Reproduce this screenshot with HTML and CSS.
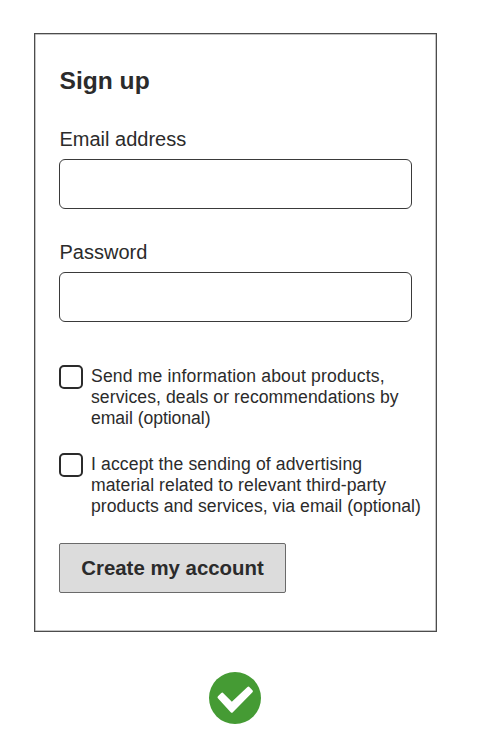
FILE: index.html
```html
<!DOCTYPE html>
<html lang="en">
<head>
<meta charset="utf-8">
<title>Sign up</title>
<link rel="stylesheet" href="styles.css">
</head>
<body>
<main class="page">
  <form class="card">
    <h1 class="title">Sign up</h1>
    <div class="field">
      <label class="label" for="email">Email address</label>
      <input class="input" id="email" type="email">
    </div>
    <div class="field">
      <label class="label" for="password">Password</label>
      <input class="input" id="password" type="password">
    </div>
    <div class="options">
      <label class="option">
        <input class="checkbox" type="checkbox">
        <span class="option-text"><span class="line loosest">Send me information about products,</span> <span class="line loose">services, deals or recommendations by</span> <span class="line tight">email (optional)</span></span>
      </label>
      <label class="option">
        <input class="checkbox" type="checkbox">
        <span class="option-text"><span class="line looser">I accept the sending of advertising</span> <span class="line loose">material related to relevant third-party</span> <span class="line">products and services, via email (optional)</span></span>
      </label>
    </div>
    <button class="submit" type="button">Create my account</button>
  </form>
  <svg class="status" viewBox="0 0 52 52" aria-hidden="true">
    <circle cx="26" cy="26" r="26" fill="#459b34"/>
    <path d="M10 25.3L13.3 22.2L22.8 31.8L39.5 16.2L42.4 19.2L22.8 39.2Z" fill="#fff" stroke="#fff" stroke-width="3" stroke-linejoin="round"/>
  </svg>
</main>
</body>
</html>
```

FILE: styles.css
```css
* { box-sizing: border-box; }

body {
  margin: 0;
  background: #fff;
  color: #2b2b2b;
  font-family: "Liberation Sans", Arial, sans-serif;
}

.page {
  display: flex;
  flex-direction: column;
  width: 498px;
  height: 744px;
  padding: 33px 0 0 34px;
}

.card {
  width: 403px;
  height: 599px;
  padding: 31px 0 0 24px;
  border: 1px solid #4c4c4c;
  box-shadow: inset 0 0 0 .5px #8a8a8a;
}

.title {
  height: 31px;
  margin: 0;
  padding-left: .5px;
  font-size: 24.6px;
  line-height: 32px;
}

.field {
  display: flex;
  flex-direction: column;
  margin-top: 31px;
}

.label {
  height: 32px;
  padding-left: .5px;
  font-size: 20px;
  line-height: 24px;
}

.input {
  width: 353px;
  height: 50px;
  margin: 0;
  border: 1px solid #3a3a3a;
  border-radius: 6px;
  background: #fff;
}

.options {
  display: flex;
  flex-direction: column;
  gap: 24px;
  margin-top: 43px;
}

.option {
  display: flex;
  gap: 8px;
  height: 64px;
}

.checkbox {
  appearance: none;
  flex: none;
  width: 24px;
  height: 24px;
  margin: 0;
  border: 2px solid #2b2b2b;
  border-radius: 5px;
}

.option-text {
  padding-top: 1px;
  font-size: 17.6px;
  line-height: 21.2px;
  white-space: nowrap;
}

.line {
  display: block;
  letter-spacing: .03px;
}

.tight { letter-spacing: -.05px; }
.loose { letter-spacing: .07px; }
.looser { letter-spacing: .12px; }
.loosest { letter-spacing: .15px; }

.submit {
  width: 227px;
  height: 50px;
  margin-top: 26px;
  padding: 0;
  border: 1px solid #6a6a6a;
  border-radius: 2px;
  background: #dcdcdc;
  color: #2b2b2b;
  font: bold 20.4px "Liberation Sans", Arial, sans-serif;
}

.status {
  width: 52px;
  height: 52px;
  margin: 40.3px 0 0 175.4px;
}
```
